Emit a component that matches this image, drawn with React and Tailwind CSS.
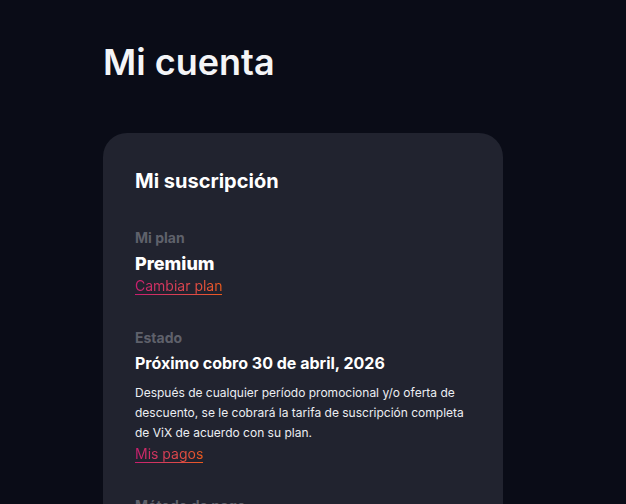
import React from "react";

function GradLink({ children, className = "" }) {
  return (
    <a href="#" className={"inline-flex flex-col self-start " + className}>
      <span className="bg-gradient-to-r from-[#c81d6f] to-[#ec5a1a] bg-clip-text text-transparent text-[14px] leading-[17px]">
        {children}
      </span>
      <span className="h-px bg-gradient-to-r from-[#c81d6f] to-[#ec5a1a]" />
    </a>
  );
}

export default function App() {
  return (
    <div className="h-[504px] bg-[#0a0c17] font-['Inter',sans-serif] text-white overflow-hidden">
      <div className="pl-[103px] pt-[40px]">
        <h1 className="text-[36px] leading-[44px] font-semibold text-[#f4f5f7]">Mi cuenta</h1>
        <div className="mt-[49px] w-[400px] rounded-[24px] bg-[#21232f] px-[32px] pt-[36px] pb-[40px]">
          <h2 className="text-[20px] leading-[24px] font-bold">Mi suscripción</h2>
          <div className="mt-[37px] flex flex-col">
            <div className="text-[14px] leading-[16px] font-bold text-[#5f616b]">Mi plan</div>
            <div className="mt-[7px] text-[18px] leading-[22px] font-extrabold">Premium</div>
            <GradLink className="mt-[2px]">Cambiar plan</GradLink>
          </div>
          <div className="mt-[35px] flex flex-col">
            <div className="text-[14px] leading-[16px] font-bold text-[#5f616b]">Estado</div>
            <div className="mt-[7px] text-[16px] leading-[20px] font-bold">Próximo cobro 30 de abril, 2026</div>
            <p className="mt-[10px] text-[12px] leading-[20px] text-[#eceef2]">
              Después de cualquier período promocional y/o oferta de descuento, se le cobrará la tarifa de suscripción completa de ViX de acuerdo con su plan.
            </p>
            <GradLink className="mt-[2px]">Mis pagos</GradLink>
          </div>
          <div className="mt-[35px] flex flex-col">
            <div className="text-[14px] leading-[16px] font-bold text-[#5f616b]">Método de pago</div>
          </div>
        </div>
      </div>
    </div>
  );
}
